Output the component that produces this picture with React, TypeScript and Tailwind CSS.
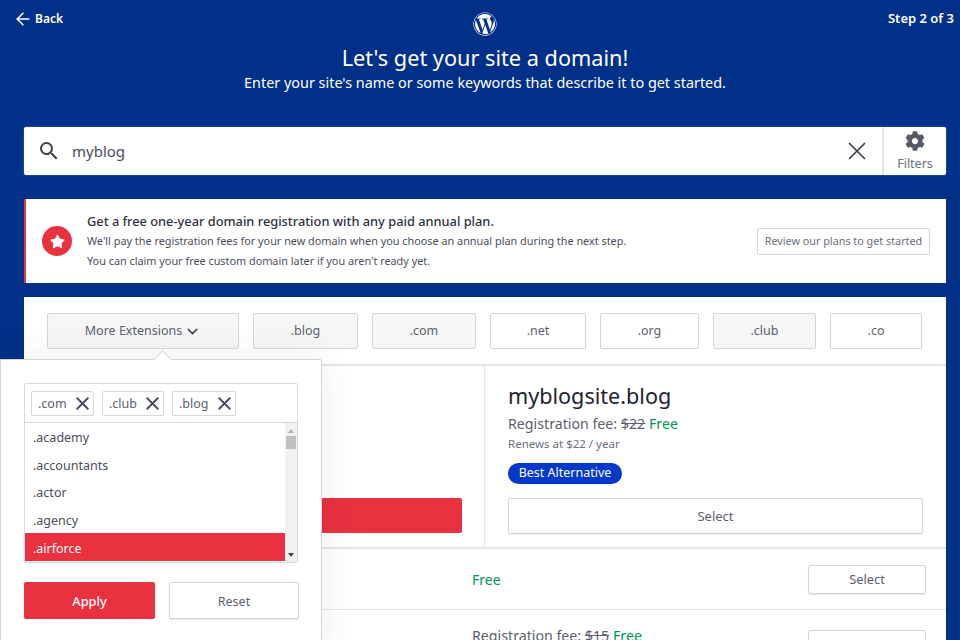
import React from 'react'
import { ArrowLeft, ChevronDown, X } from 'lucide-react'
import { FaCog, FaStar, FaWordpress } from 'react-icons/fa'
import { MdSearch } from 'react-icons/md'

const extensions = [
  { label: '.blog', width: 'w-[105px]', active: true },
  { label: '.com', width: 'w-[104px]', active: true },
  { label: '.net', width: 'w-[96px]', active: false },
  { label: '.org', width: 'w-[99px]', active: false },
  { label: '.club', width: 'w-[103px]', active: true },
  { label: '.co', width: 'w-[92px]', active: false },
]

const tags = [
  { label: '.com', width: 'w-[63px]' },
  { label: '.club', width: 'w-[62px]' },
  { label: '.blog', width: 'w-[64px]' },
]

const options = ['.academy', '.accountants', '.actor', '.agency']

function ExtensionsDropdown() {
  return (
    <div className="absolute left-0 top-[359px] h-[300px] w-[322px] rounded-tr-[2px] border border-[#d4d5d8] bg-white pl-[23px] pt-[23px] shadow-[0_0_36px_rgba(40,50,80,0.09)]">
      <div className="absolute left-[155px] top-[-7px] size-[13px] rotate-45 border-l border-t border-[#d4d5d8] bg-white" />

      <div className="w-[274px] rounded-[2px] border border-[#d8d9dc]">
        <div className="flex h-[39px] items-center gap-2 border-b border-[#d8d9dc] pl-[6px]">
          {tags.map((tag) => (
            <div
              key={tag.label}
              className={`flex h-[25px] items-center justify-between rounded-[2px] border border-[#d8d9dc] pl-[6px] text-[12.5px] text-[#5c606c] ${tag.width}`}
            >
              <span className="pt-[2px]">{tag.label}</span>
              <X size={21} strokeWidth={2.2} className="text-[#4a4e5a]" />
            </div>
          ))}
        </div>

        <div className="flex h-[139px]">
          <div className="flex-1">
            {options.map((option) => (
              <div key={option} className="flex h-[27.6px] items-center pl-2 pt-[3px] text-[12.5px] text-[#4a4e5a]">
                {option}
              </div>
            ))}
            <div className="flex h-[28px] items-center bg-[#ea3140] pl-2 pt-[3px] text-[12.5px] text-white">.airforce</div>
          </div>
          <div className="flex w-[12px] flex-col items-center justify-between bg-[#f1f1f1] pt-[6px] pb-[5px]">
            <div className="flex w-full flex-col items-center gap-[3px]">
              <div className="h-0 w-0 border-x-[3px] border-b-[4px] border-x-transparent border-b-[#b0b0b0]" />
              <div className="h-[13px] w-[10px] bg-[#c1c1c1]" />
            </div>
            <div className="h-0 w-0 border-x-[3px] border-t-[4px] border-x-transparent border-t-[#404040]" />
          </div>
        </div>
      </div>

      <div className="mt-[19px] flex gap-[14px]">
        <button className="h-[37px] w-[131px] rounded-[2px] bg-[#ea3140] pt-[2px] text-[12.8px] font-medium text-white">Apply</button>
        <button className="h-[37px] w-[130px] rounded-[2px] border border-[#d4d5d8] bg-white pt-[3px] text-[12.5px] text-[#5c606c] shadow-[0_1px_1px_rgba(0,0,0,0.08)]">
          Reset
        </button>
      </div>
    </div>
  )
}

export default function App() {
  return (
    <div
      className="relative h-[640px] w-[960px] overflow-hidden bg-[#003087] pl-6 pr-[14px]"
      style={{ fontFamily: '"Noto Sans", "Open Sans", sans-serif' }}
    >
      <header className="relative h-[127px] text-center text-white">
        <div className="absolute left-[-11px] top-[9px] flex items-center gap-[2px] text-[12px] font-semibold">
          <ArrowLeft size={20} strokeWidth={1.8} />
          Back
        </div>
        <div className="absolute right-[-8px] top-[9px] text-[13px] font-semibold">Step 2 of 3</div>
        <div className="flex justify-center pt-[12px]">
          <FaWordpress size={24} />
        </div>
        <h1 className="mt-[6px] text-[21.7px] leading-[31px]">Let's get your site a domain!</h1>
        <p className="text-[14.4px] leading-[20px]">Enter your site's name or some keywords that describe it to get started.</p>
      </header>

      <div className="flex h-[48px] w-[922px] items-center rounded-[2px] bg-white shadow-[0_0_2px_rgba(90,150,210,0.9)]">
        <MdSearch size={24} className="ml-[13px] text-[#3c404c]" />
        <span className="ml-[11px] flex-1 text-[15px] text-[#4a4e5a]">myblog</span>
        <X size={30} strokeWidth={1.4} className="mr-[10px] text-[#3c404c]" />
        <div className="flex h-full w-[64px] flex-col items-center border-l-2 border-[#e2e3e5] pt-[4px] text-[#6b6f7a]">
          <FaCog size={20} className="text-[#555963]" />
          <span className="mt-[4px] text-[12.5px] leading-[18px]">Filters</span>
        </div>
      </div>

      <section className="mt-6 flex h-[84px] w-[922px] items-center border-l-2 border-[#ea3140] bg-white pl-[16px] pr-[16px]">
        <div className="flex size-[30px] shrink-0 items-center justify-center rounded-full bg-[#ea3140] text-white">
          <FaStar size={15} />
        </div>
        <div className="ml-[15px] flex-1">
          <div className="text-[12.8px] font-medium leading-[19px] text-[#2e3240]">Get a free one-year domain registration with any paid annual plan.</div>
          <div className="text-[10.85px] leading-[20px] text-[#4a4e5a]">We'll pay the registration fees for your new domain when you choose an annual plan during the next step.</div>
          <div className="text-[10.85px] leading-[20px] text-[#4a4e5a]">You can claim your free custom domain later if you aren't ready yet.</div>
        </div>
        <button className="h-[27px] w-[173px] rounded-[2px] border border-[#d4d5d8] bg-white text-[10.8px] text-[#6b6f7a]">
          Review our plans to get started
        </button>
      </section>

      <section className="mt-[14px] h-[400px] w-[922px] bg-white">
        <div className="flex h-[69px] items-center gap-[14px] border-b-2 border-[#e4e5e7] pl-[23px]">
          <button className="flex h-[36px] w-[192px] items-center justify-center gap-[2px] rounded-[2px] border border-[#d4d5d8] bg-[#f5f6f6] pt-[2px] text-[12.5px] text-[#5c606c]">
            More Extensions
            <ChevronDown size={17} strokeWidth={2} className="text-[#3c404c]" />
          </button>
          {extensions.map((ext) => (
            <button
              key={ext.label}
              className={`h-[36px] rounded-[2px] border border-[#d4d5d8] pt-[2px] text-[12.5px] text-[#5c606c] ${ext.width} ${ext.active ? 'bg-[#f5f6f6]' : 'bg-white'}`}
            >
              {ext.label}
            </button>
          ))}
        </div>

        <div className="flex h-[183px] border-b-2 border-[#e4e5e7]">
          <div className="flex w-[461px] items-end border-r border-[#e4e5e7] pb-[14px] pl-[22px] pr-[22px]">
            <div className="h-[35px] w-full rounded-[2px] bg-[#ea3140]" />
          </div>
          <div className="flex-1 pl-[23px] pr-[23px] pt-[15px]">
            <div className="text-[21.6px] leading-[30px] text-[#1f2230]">myblogsite.blog</div>
            <div className="mt-[2px] text-[14.2px] leading-[22px] text-[#5c606c]">
              Registration fee: <span className="line-through">$22</span> <span className="text-[#00935c]">Free</span>
            </div>
            <div className="text-[11.5px] leading-[18px] text-[#6b6f7a]">Renews at $22 / year</div>
            <div className="mt-[10px] flex h-[21px] w-[114px] items-center justify-center rounded-full bg-[#0438c8] text-[12.5px] text-white">
              Best Alternative
            </div>
            <button className="mt-[14px] h-[36px] w-full rounded-[2px] border border-[#d4d5d8] bg-white pt-[2px] text-[13px] text-[#5c606c] shadow-[0_1px_1px_rgba(0,0,0,0.08)]">
              Select
            </button>
          </div>
        </div>

        <div className="flex h-[61px] items-center justify-between border-b border-[#e4e5e7] pl-[448px] pr-[20px]">
          <span className="text-[14px] text-[#00935c]">Free</span>
          <button className="h-[29px] w-[118px] rounded-[2px] border border-[#d4d5d8] bg-white pt-[1px] text-[12.8px] text-[#5c606c] shadow-[0_1px_1px_rgba(0,0,0,0.08)]">
            Select
          </button>
        </div>

        <div className="flex items-start justify-between pl-[448px] pr-[20px] pt-[15px]">
          <span className="text-[14.2px] leading-[22px] text-[#5c606c]">
            Registration fee: <span className="line-through">$15</span> <span className="text-[#00935c]">Free</span>
          </span>
          <button className="mt-[5px] h-[36px] w-[118px] rounded-[2px] border border-[#d4d5d8] bg-white text-[12.8px] text-[#5c606c]">
            Select
          </button>
        </div>
      </section>

      <ExtensionsDropdown />
    </div>
  )
}
